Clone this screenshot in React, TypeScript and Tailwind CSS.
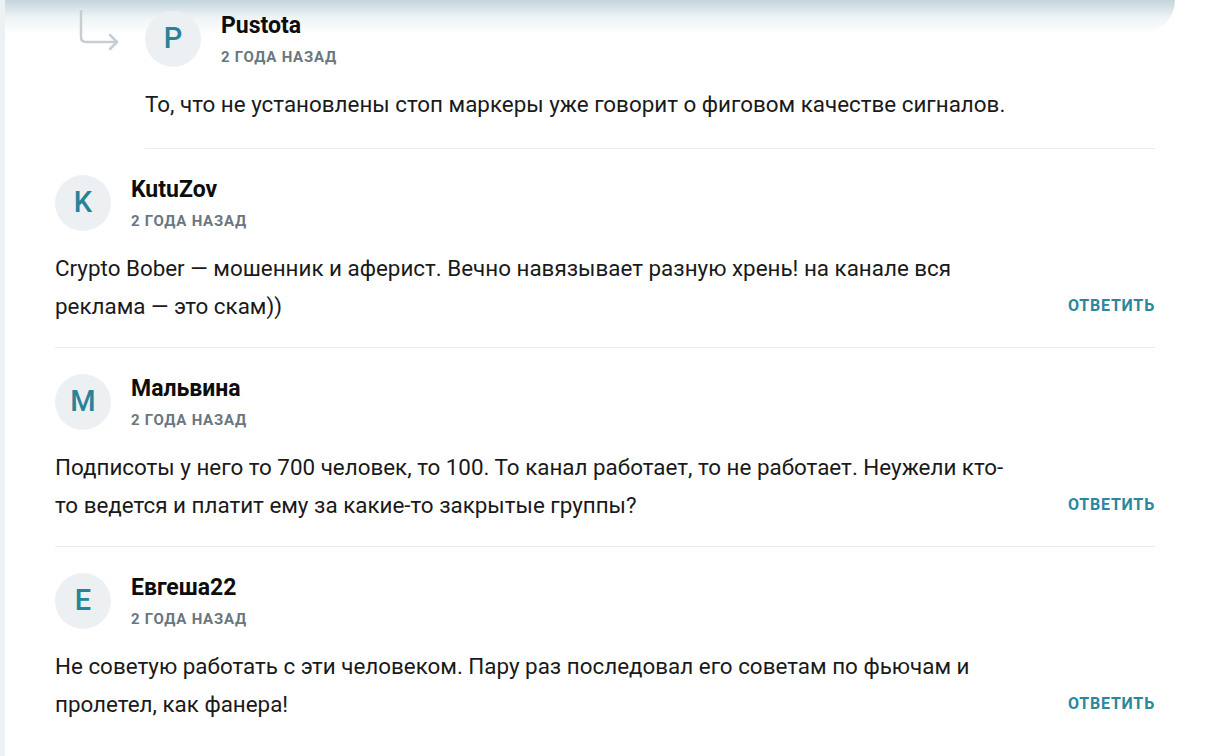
const COMMENTS = [
  {
    letter: "K",
    name: "KutuZov",
    text: "Crypto Bober — мошенник и аферист. Вечно навязывает разную хрень! на канале вся реклама — это скам))",
  },
  {
    letter: "М",
    name: "Мальвина",
    text: "Подписоты у него то 700 человек, то 100. То канал работает, то не работает. Неужели кто-то ведется и платит ему за какие-то закрытые группы?",
  },
  {
    letter: "Е",
    name: "Евгеша22",
    text: "Не советую работать с эти человеком. Пару раз последовал его советам по фьючам и пролетел, как фанера!",
  },
];

const Avatar = ({ letter }: { letter: string }) => (
  <div className="w-14 h-14 rounded-full bg-[#edf0f3] flex items-center justify-center text-[29px] font-medium text-[#2a8299] shrink-0">
    {letter}
  </div>
);

const Head = ({ letter, name }: { letter: string; name: string }) => (
  <div className="flex items-center gap-5">
    <Avatar letter={letter} />
    <div className="flex flex-col">
      <span className="text-[23px] font-bold text-[#0d0d0d] leading-[26px]">{name}</span>
      <span className="text-[15px] font-bold tracking-[0.05em] text-[#6a7780] leading-[18px] mt-[9px]">
        2 ГОДА НАЗАД
      </span>
    </div>
  </div>
);

export default function App() {
  return (
    <div className="relative min-h-[756px] bg-white font-['Roboto',sans-serif] text-[#1a1a1a] border-l-[5px] border-[#eef1f3] overflow-hidden">
      <div className="absolute top-0 left-0 w-[1170px] h-[34px] rounded-br-[60px] bg-gradient-to-b from-[#c3d5dc] via-[#eef3f5] to-transparent pointer-events-none" />
      <div className="relative w-[1100px] ml-[50px]">
        <div className="flex pt-[11px]">
          <svg width="90" height="45" viewBox="0 0 90 45" className="shrink-0 mt-[-1px]" fill="none" stroke="#c7ced3" strokeWidth="2.5" strokeLinecap="round" strokeLinejoin="round">
            <path d="M26 0 V27 Q26 32 31 32 H62" />
            <path d="M55 25 L62 32 L55 39" />
          </svg>
          <div className="flex-1">
            <Head letter="P" name="Pustota" />
            <p className="text-[22.4px] leading-[38px] mt-[18px]">
              То, что не установлены стоп маркеры уже говорит о фиговом качестве сигналов.
            </p>
            <div className="border-b border-[#ececec] mt-[25px]" />
          </div>
        </div>
        {COMMENTS.map((c, i) => (
          <div key={i} className="pt-[26px] pb-[22px] border-b border-[#ececec] last:border-b-0">
            <Head letter={c.letter} name={c.name} />
            <div className="flex items-end justify-between mt-[18px]">
              <p className="text-[22.4px] leading-[38px] w-[960px]">{c.text}</p>
              <a className="text-[16px] font-bold tracking-[0.05em] text-[#2a879d] leading-[38px]">ОТВЕТИТЬ</a>
            </div>
          </div>
        ))}
      </div>
    </div>
  );
}
